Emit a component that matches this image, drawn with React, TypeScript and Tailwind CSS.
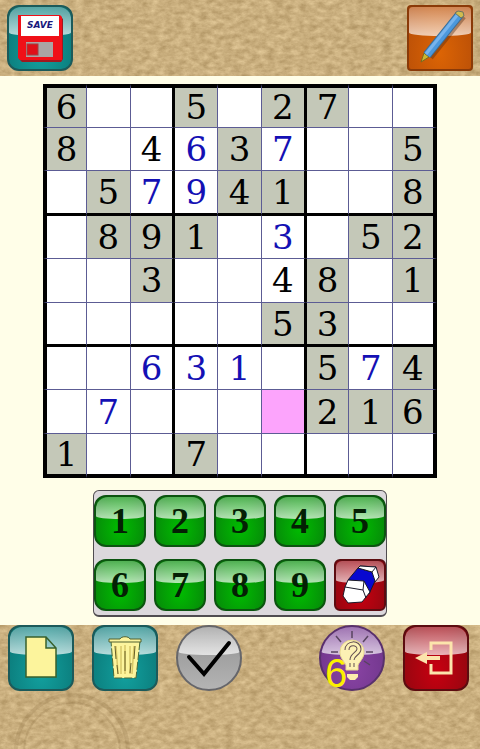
import React, { ReactNode } from 'react'
import clsx from 'clsx'

type Tone = 'teal' | 'orange' | 'silver' | 'purple' | 'red' | 'green'

// g = given, u = entered by the player, k = locked answer, x = selected
const rows = [
  '6g .. .. 5g .. 2g 7g .. ..',
  '8g .. 4k 6u 3g 7u .. .. 5g',
  '.. 5g 7u 9u 4g 1g .. .. 8g',
  '.. 8g 9g 1g .. 3u .. 5g 2g',
  '.. .. 3g .. .. 4k 8g .. 1g',
  '.. .. .. .. .. 5g 3g .. ..',
  '.. .. 6u 3u 1u .. 5g 7u 4g',
  '.. 7u .. .. .. .x 2g 1g 6g',
  '1g .. .. 7g .. .. .. .. ..',
].map((row) => row.split(' '))

const tones: Record<Tone, string> = {
  teal: 'border-[#1c5a5a] bg-radial-[at_50%_75%] from-[#12a09e] to-[#0a7474]',
  orange: 'border-[#8a3a08] bg-radial-[at_50%_75%] from-[#dc6404] to-[#b44c08]',
  silver: 'border-[#66666a] bg-linear-to-b from-[#909090] to-[#b4b4b4]',
  purple: 'border-[#58306c] bg-radial-[at_50%_65%] from-[#8a44a4] to-[#6c3488]',
  red: 'border-[#5c0c10] bg-radial-[at_50%_70%] from-[#c80010] to-[#880810]',
  green: 'border-[#0c5410] bg-radial-[at_50%_65%] from-[#00bc00] to-[#087c0c]',
}

const Parchment = ({
  id,
  seed,
  children,
}: {
  id: string
  seed: number
  children?: ReactNode
}) => (
  <svg className="absolute inset-0 w-full h-full" aria-hidden="true">
    <filter
      id={id}
      x="0"
      y="0"
      width="100%"
      height="100%"
      colorInterpolationFilters="sRGB"
    >
      <feTurbulence
        type="fractalNoise"
        baseFrequency="0.12 0.2"
        numOctaves="5"
        seed={seed}
      />
      <feColorMatrix values="0.24 0 0 0 0.67  0.25 0 0 0 0.56  0.25 0 0 0 0.37  0 0 0 0 1" />
    </filter>
    <rect width="100%" height="100%" filter={`url(#${id})`} />
    {children}
  </svg>
)

const GlossButton = ({
  label,
  tone,
  shape = 'rounded-xl',
  size = 'size-[66px]',
  children,
}: {
  label: string
  tone: Tone
  shape?: string
  size?: string
  children: ReactNode
}) => (
  <button
    type="button"
    aria-label={label}
    className={clsx('relative shrink-0 border-2', shape, size, tones[tone])}
  >
    <span className={clsx('absolute inset-0 overflow-hidden', shape)}>
      <span className="block h-[46%] rounded-b-[50%_12%] bg-linear-to-b from-white/30 to-white/70" />
    </span>
    <span className="absolute inset-0 flex items-center justify-center">
      {children}
    </span>
  </button>
)

const SaveIcon = () => (
  <svg viewBox="0 0 66 66" className="size-[66px] shrink-0">
    <path d="M12 12h42l2 2v40l-2 3H15l-3-3z" fill="#a01820" />
    <path d="M11 10h42l2 2v43H13l-2-2z" fill="#f01018" />
    <rect x="14" y="11" width="38" height="20" fill="#fff" />
    <text
      x="33"
      y="23"
      textAnchor="middle"
      fill="#18187c"
      className="font-['DejaVu_Sans'] text-[9px] font-bold italic"
    >
      SAVE
    </text>
    <rect x="19" y="37" width="27" height="15" fill="#aaa4a4" />
    <rect x="20" y="39" width="11" height="11" fill="#e01018" stroke="#a04040" />
  </svg>
)

const PenIcon = () => (
  <svg viewBox="0 0 66 66" className="size-[66px] shrink-0">
    <path d="M23 52l33-41" stroke="#502810" strokeOpacity="0.4" strokeWidth="7" />
    <path d="M14 57l3-9 5 4z" fill="#c8b830" stroke="#786820" />
    <path d="M20 50L53 9" stroke="#3c6c94" strokeWidth="9" />
    <path d="M20 50L53 9" stroke="#4c98dc" strokeWidth="7" />
    <path d="M19 49L52 8" stroke="#78b4ec" strokeWidth="3" />
    <path d="M51 6l5 1 1 4-3 2-6-5z" fill="#d0bc50" stroke="#6c7460" />
  </svg>
)

const PageIcon = () => (
  <svg viewBox="0 0 66 66" className="size-[66px] shrink-0">
    <path
      d="M18 12h20l10 11v29H18z M38 12v11h10"
      fill="#fcf49c"
      stroke="#38602c"
      strokeWidth="1.5"
    />
  </svg>
)

const TrashIcon = () => (
  <svg viewBox="0 0 66 66" className="size-[66px] shrink-0">
    <path
      d="M19 16h29l-4 37H22z"
      fill="#fcf49c"
      stroke="#486838"
      strokeDasharray="8 2"
    />
    <path
      d="M17 17v-3h11c1-3 9-3 10 0h11v3z"
      fill="#fcf49c"
      stroke="#506030"
    />
    <path
      d="M24 21l2 28M29 21v28M33 20v29M38 21v28M42 21l-2 28"
      fill="none"
      stroke="#d8c868"
      strokeWidth="1.5"
    />
    <path
      d="M23 21l1 13M43 21l-1 13M25 40l1 9M39 38l-1 10M33 26v20"
      stroke="#686028"
    />
  </svg>
)

const CheckIcon = () => (
  <svg viewBox="0 0 66 66" className="size-[66px] shrink-0">
    <path
      d="M13 32l15 17 25-31"
      fill="none"
      stroke="#000"
      strokeWidth="4"
      strokeLinecap="round"
    />
  </svg>
)

const HintIcon = () => (
  <svg viewBox="0 0 66 66" className="size-[66px] shrink-0">
    <path
      d="M33 13V6M22 17l-5-6M44 17l5-6M19 27h-7M47 27h7M45 36l6 4"
      stroke="#584460"
      strokeWidth="1.5"
    />
    <path
      d="M27 45v-5c-2-4-6-7-6-13a12 12 0 0 1 24 0c0 6-4 9-6 13v5z"
      fill="#fcf0b4"
      stroke="#e8d890"
    />
    <path
      d="M28 25c0-8 12-8 12-1 0 5-7 5-7 11M33 38v4"
      fill="none"
      stroke="#604c50"
      strokeWidth="5"
    />
    <path
      d="M28 25c0-8 12-8 12-1 0 5-7 5-7 11M33 38v4"
      fill="none"
      stroke="#fcf0b4"
      strokeWidth="3"
    />
    <path d="M28 49h11v3l-3 3h-5l-3-3z" fill="#fcecac" />
  </svg>
)

const ExitIcon = () => (
  <svg viewBox="0 0 66 66" className="size-[66px] shrink-0">
    <path
      d="M28 25v-7h20v30H28v-9"
      fill="none"
      stroke="#fce4ac"
      strokeWidth="3"
    />
    <path d="M12 33l12-6v4h13v4H24v4z" fill="#fce4ac" />
  </svg>
)

const EraserIcon = () => (
  <svg viewBox="0 0 52 52" className="size-[52px] shrink-0">
    <g stroke="#181828" strokeLinejoin="round">
      <path d="M26 7l16 1 3 10-4 5-18-8z" fill="#fff" />
      <path d="M24 9l14 4 3 9-6 13-6-12-15-2z" fill="#0808d0" />
      <path d="M26 7l16 1-4 5-14-4z" fill="#fff" />
      <path d="M14 21l16 1 6 11-8 10-14 1-5-7 2-9z" fill="#fff" />
      <path d="M11 28l18 3 1-9M29 31l3 8" fill="none" />
    </g>
  </svg>
)

const Board = () => (
  <div className="grid grid-cols-9 w-[82%] bg-black">
    {rows.map((row, y) =>
      row.map((cell, x) => (
        <button
          key={`${y}-${x}`}
          type="button"
          aria-label={`Row ${y + 1}, column ${x + 1}`}
          className={clsx(
            "flex aspect-square min-w-0 items-center justify-center border-[#5c5c94] font-['DejaVu_Serif',serif] text-[34px] leading-none",
            x === 0 && 'border-l-4 border-l-black',
            x === 8 && 'border-r-4 border-r-black',
            y === 0 && 'border-t-4 border-t-black',
            y === 8 && 'border-b-4 border-b-black',
            (x === 2 || x === 5) && 'border-r-2 border-r-black',
            (x === 3 || x === 6) && 'border-l border-l-black',
            (y === 2 || y === 5) && 'border-b-2 border-b-black',
            (y === 3 || y === 6) && 'border-t border-t-black',
            x % 3 !== 2 && 'border-r',
            y % 3 !== 2 && 'border-b',
            cell[1] === 'g' && 'bg-[#c4c8b8]',
            cell[1] === 'x' && 'bg-[#fca4fc]',
            cell[1] !== 'g' && cell[1] !== 'x' && 'bg-white',
            cell[1] === 'u' ? 'text-[#1410b4]' : 'text-black',
          )}
        >
          {cell[0] !== '.' && cell[0]}
        </button>
      )),
    )}
  </div>
)

const NumberPad = () => (
  <div className="mt-3 grid grid-cols-5 gap-x-2 gap-y-3 rounded-md border border-b-2 border-[#504c50] bg-[#dcd8dc] py-1">
    {['1', '2', '3', '4', '5', '6', '7', '8', '9'].map((digit) => (
      <GlossButton key={digit} label={digit} tone="green" size="size-[52px]">
        <span className="font-['Liberation_Serif',serif] text-[36px] leading-none font-bold text-[#042004]">
          {digit}
        </span>
      </GlossButton>
    ))}
    <GlossButton label="Erase" tone="red" shape="rounded-md" size="size-[52px]">
      <EraserIcon />
    </GlossButton>
  </div>
)

const App = () => (
  <div className="flex min-h-screen flex-col bg-[#fffee8]">
    <header className="relative">
      <Parchment id="parchment-top" seed={4} />
      <div className="relative flex justify-between px-[7px] py-[5px]">
        <GlossButton label="Save" tone="teal">
          <SaveIcon />
        </GlossButton>
        <GlossButton label="Pencil" tone="orange" shape="rounded-sm">
          <PenIcon />
        </GlossButton>
      </div>
    </header>

    <main className="flex flex-col items-center py-2">
      <Board />
      <NumberPad />
    </main>

    <footer className="relative flex-1">
      <Parchment id="parchment-bottom" seed={9}>
        <g fill="none" stroke="#6c5024" strokeOpacity="0.14" strokeWidth="4">
          <circle cx="72" cy="126" r="56" />
          <circle cx="72" cy="126" r="48" strokeWidth="2" />
        </g>
      </Parchment>
      <div className="relative flex justify-between pr-[11px] pl-2">
        <div className="flex gap-[18px]">
          <GlossButton label="New" tone="teal">
            <PageIcon />
          </GlossButton>
          <GlossButton label="Clear" tone="teal">
            <TrashIcon />
          </GlossButton>
          <GlossButton label="Check" tone="silver" shape="rounded-full">
            <CheckIcon />
          </GlossButton>
        </div>
        <div className="flex gap-[18px]">
          <GlossButton label="Hint" tone="purple" shape="rounded-full">
            <HintIcon />
            <span className="absolute -bottom-1 left-1 font-['Liberation_Sans',sans-serif] text-[40px] leading-none text-[#fcf000]">
              6
            </span>
          </GlossButton>
          <GlossButton label="Exit" tone="red">
            <ExitIcon />
          </GlossButton>
        </div>
      </div>
    </footer>
  </div>
)

export default App
